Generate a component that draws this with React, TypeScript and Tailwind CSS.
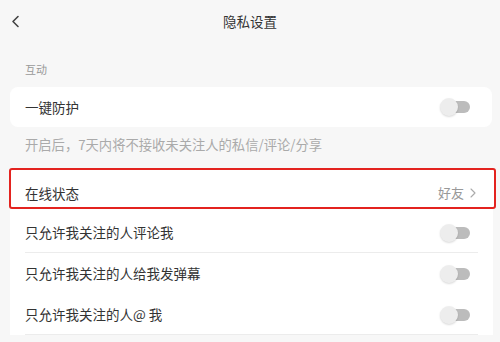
import React from "react"

function Toggle() {
  return (
    <div className="relative w-[30px] h-[18px] flex items-center">
      <div className="absolute right-0 w-[22px] h-[12px] rounded-full bg-[#bcbcbc]" />
      <div className="absolute left-0 w-[18px] h-[18px] rounded-full bg-[#ededed] shadow-[0_1px_2px_rgba(0,0,0,0.15)]" />
    </div>
  )
}

function Row({ label, line }: { label: string; line?: boolean }) {
  return (
    <div className="ml-[15px] mr-[15px] h-[41px] flex items-center justify-between relative">
      <span className="text-[13.5px] text-[#333]">{label}</span>
      <div className="mr-[8px]">
        <Toggle />
      </div>
      {line && <div className="absolute left-0 right-0 bottom-0 h-px bg-[#ececec]" />}
    </div>
  )
}

export default function App() {
  return (
    <div
      className="w-[500px] h-[342px] overflow-hidden bg-[#f7f7f7]"
      style={{ fontFamily: '"Noto Sans CJK SC", "Noto Sans", sans-serif' }}
    >
      <div className="relative h-[42px] flex items-center justify-center">
        <svg className="absolute left-[11px] top-[15px]" width="9" height="13" viewBox="0 0 9 13">
          <path d="M7 1.5 L2 6.5 L7 11.5" fill="none" stroke="#444" strokeWidth="1.6" strokeLinecap="round" strokeLinejoin="round" />
        </svg>
        <span className="text-[13.5px] text-[#333]">隐私设置</span>
      </div>

      <div className="mt-[19px] pl-[25px] h-[16px] leading-[16px] text-[11px] text-[#999]">互动</div>

      <div className="mt-[10px] mx-[10px] w-[482px] h-[40px] rounded-[8px] bg-white flex items-center justify-between pl-[15px] pr-[22px]">
        <span className="text-[13.5px] text-[#333]">一键防护</span>
        <Toggle />
      </div>

      <div className="mt-[9px] pl-[25px] h-[18px] leading-[18px] text-[13.3px] text-[#aaa]">
        开启后，7天内将不接收未关注人的私信/评论/分享
      </div>

      <div className="mt-[14px] ml-[9px] w-[487px] h-[41px] border-2 border-[#e3231f] rounded-[3px] bg-white flex items-center justify-between pl-[14px] pr-[18px] pt-[9px]">
        <span className="text-[13.5px] text-[#333]">在线状态</span>
        <div className="flex items-center gap-[6px]">
          <span className="text-[13px] text-[#999]">好友</span>
          <svg width="6" height="10" viewBox="0 0 6 10">
            <path d="M1 1 L5 5 L1 9" fill="none" stroke="#aaa" strokeWidth="1.1" strokeLinecap="round" strokeLinejoin="round" />
          </svg>
        </div>
      </div>

      <div className="ml-[10px] w-[483px] bg-white pt-[3px]">
        <Row label="只允许我关注的人评论我" line />
        <Row label="只允许我关注的人给我发弹幕" />
        <Row label="只允许我关注的人@ 我" line />
      </div>
    </div>
  )
}
